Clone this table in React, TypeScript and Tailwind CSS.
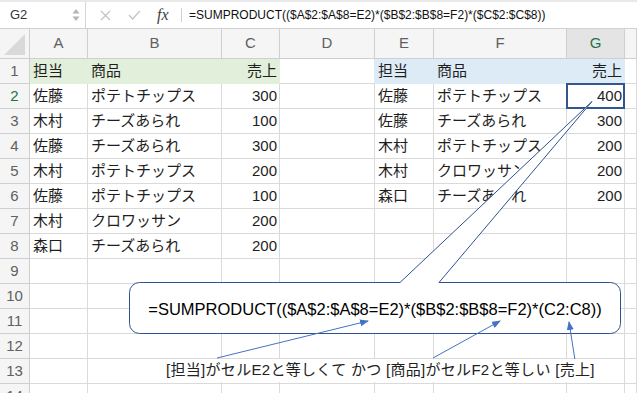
import React from 'react';

const COLS = ['A', 'B', 'C', 'D', 'E', 'F', 'G', ''];

const DATA: Record<number, string[]> = {
  1: ['担当', '商品', '売上', '', '担当', '商品', '売上', ''],
  2: ['佐藤', 'ポテトチップス', '300', '', '佐藤', 'ポテトチップス', '400', ''],
  3: ['木村', 'チーズあられ', '100', '', '佐藤', 'チーズあられ', '300', ''],
  4: ['佐藤', 'チーズあられ', '300', '', '木村', 'ポテトチップス', '200', ''],
  5: ['木村', 'ポテトチップス', '200', '', '木村', 'クロワッサン', '200', ''],
  6: ['佐藤', 'ポテトチップス', '100', '', '森口', 'チーズあられ', '200', ''],
  7: ['木村', 'クロワッサン', '200', '', '', '', '', ''],
  8: ['森口', 'チーズあられ', '200', '', '', '', '', ''],
};

const ROWS = Array.from({ length: 14 }, (_, i) => i + 1);

function FormulaBar() {
  return (
    <div className="h-[29px] border-t-2 border-t-[#e9e9e9] border-b border-b-[#d2d2d2] flex items-center bg-white">
      <div className="w-[86px] h-full border-r border-[#d6d6d6] flex items-center justify-between pl-[10px] pr-[5px]">
        <span className="text-[13px] text-[#333]">G2</span>
        <svg width="8" height="16" viewBox="0 0 8 16">
          <path d="M4 2 L7.5 6.5 H0.5 Z" fill="#b5b5b5" />
          <path d="M4 14 L7.5 9.5 H0.5 Z" fill="#b5b5b5" />
        </svg>
      </div>
      <svg className="ml-[14px]" width="11" height="11" viewBox="0 0 11 11">
        <path d="M1 1 L10 10 M10 1 L1 10" stroke="#c4c4c4" strokeWidth="1.3" />
      </svg>
      <svg className="ml-[17px]" width="13" height="10" viewBox="0 0 13 10">
        <path d="M1 5 L4.5 9 L12 1" stroke="#c4c4c4" strokeWidth="1.3" fill="none" />
      </svg>
      <span className="ml-[16px] w-[16px] italic text-[16px] text-[#3c3c3c] [font-family:'Liberation_Serif',serif] leading-none">
        fx
      </span>
      <div className="ml-[8px] w-px h-[14px] bg-[#d0d0d0]" />
      <span className="ml-[7px] text-[12px] text-[#111] whitespace-nowrap">
        =SUMPRODUCT(($A$2:$A$8=E2)*($B$2:$B$8=F2)*($C$2:$C$8))
      </span>
    </div>
  );
}

function cellTone(row: number, col: number) {
  if (row === 1 && col <= 2) return 'bg-[#e2efda] border-[#e2efda]';
  if (row === 1 && col >= 4 && col <= 6) return 'bg-[#ddebf7] border-[#ddebf7]';
  if (row === 1 && col === 3) return 'bg-white border-b-[#dadada] border-r-[#ddebf7]';
  return 'bg-white border-[#dadada]';
}

function Sheet() {
  return (
    <div className="grid grid-cols-[30px_58px_134px_58px_95px_59px_133px_58px_1fr]">
      <div className="h-[30px] border-r border-b border-[#cfcfcf] bg-[#f5f5f5] flex items-end justify-end pr-[3px] pb-[3px]">
        <svg width="22" height="21" viewBox="0 0 22 21">
          <path d="M21 0 V21 H0 Z" fill="#d9d9d9" />
        </svg>
      </div>
      {COLS.map((c, i) => (
        <div
          key={'h' + i}
          className={
            'h-[30px] border-r border-b border-[#cfcfcf] flex items-center justify-center text-[15px] ' +
            (c === 'G' ? 'bg-[#e4e4e4] text-[#217346]' : 'bg-[#f5f5f5] text-[#606060]')
          }
        >
          {c}
        </div>
      ))}
      {ROWS.map((r) => (
        <React.Fragment key={r}>
          <div
            className={
              'h-[25px] border-r border-b border-[#cfcfcf] bg-[#f5f5f5] flex items-center justify-center text-[15px] ' +
              (r === 2 ? 'text-[#217346]' : 'text-[#606060]')
            }
          >
            {r}
          </div>
          {COLS.map((_, ci) => {
            const text = DATA[r]?.[ci] ?? '';
            const right = ci === 2 || ci === 6;
            return (
              <div
                key={ci}
                className={
                  'relative h-[25px] border-r border-b flex items-center whitespace-nowrap overflow-visible text-[15px] text-[#1e1e1e] ' +
                  cellTone(r, ci) +
                  (right ? ' justify-end pr-[2px]' : ' pl-[3px]')
                }
              >
                {text}
                {r === 2 && ci === 6 && (
                  <div className="absolute -left-px -top-px -right-px -bottom-px border-2 border-[#34568f]" />
                )}
              </div>
            );
          })}
        </React.Fragment>
      ))}
    </div>
  );
}

function Callout() {
  return (
    <>
      <svg className="absolute left-0 top-0 pointer-events-none" width="637" height="393" viewBox="0 0 637 393">
        <defs>
          <marker id="ah" markerUnits="userSpaceOnUse" markerWidth="9" markerHeight="7" refX="8" refY="3.5" orient="auto">
            <path d="M0 0 L9 3.5 L0 7 Z" fill="#4472c4" />
          </marker>
        </defs>
        <path
          d="M139.5 282.5 H400 L592 101.5 L439 282.5 H610.5 A10 10 0 0 1 620.5 292.5 V323.5 A10 10 0 0 1 610.5 333.5 H139.5 A10 10 0 0 1 129.5 323.5 V292.5 A10 10 0 0 1 139.5 282.5 Z"
          fill="#fff"
          stroke="#2f528f"
          strokeWidth="1"
        />
        <line x1="217" y1="358" x2="368" y2="321" stroke="#4472c4" strokeWidth="1" markerEnd="url(#ah)" />
        <line x1="433" y1="358" x2="500" y2="321" stroke="#4472c4" strokeWidth="1" markerEnd="url(#ah)" />
        <line x1="575" y1="360" x2="569" y2="322" stroke="#4472c4" strokeWidth="1" markerEnd="url(#ah)" />
      </svg>
      <div className="absolute left-[130px] top-[284px] w-[490px] h-[50px] flex items-center justify-center text-[16.5px] text-black whitespace-nowrap">
        =SUMPRODUCT(($A$2:$A$8=E2)*($B$2:$B$8=F2)*(C2:C8))
      </div>
      <div className="absolute left-[161px] top-[359px] h-[23px] bg-white px-[5px] flex items-center text-[15px] tracking-[0.3px] text-[#222] whitespace-nowrap">
        [担当]がセルE2と等しくて かつ [商品]がセルF2と等しい [売上]
      </div>
    </>
  );
}

export default function App() {
  return (
    <div className="relative w-[637px] h-[393px] overflow-hidden bg-white [font-family:'Liberation_Sans','Noto_Sans_CJK_JP',sans-serif]">
      <FormulaBar />
      <Sheet />
      <Callout />
    </div>
  );
}
